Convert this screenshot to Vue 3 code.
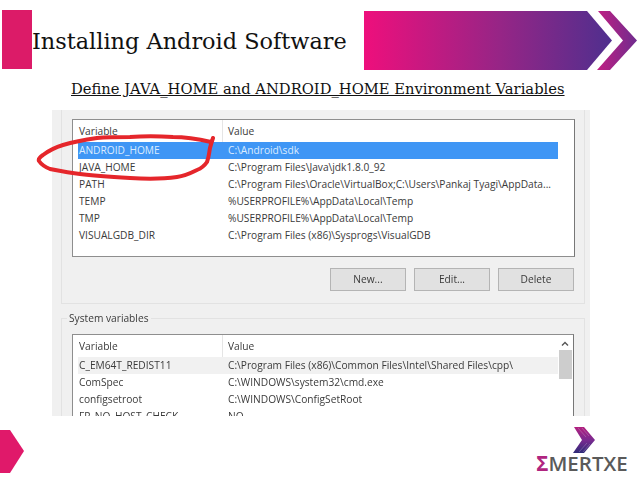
<script setup>
const userRows = [
  { name: 'ANDROID_HOME', value: 'C:\\Android\\sdk', selected: true },
  { name: 'JAVA_HOME', value: 'C:\\Program Files\\Java\\jdk1.8.0_92' },
  { name: 'PATH', value: 'C:\\Program Files\\Oracle\\VirtualBox;C:\\Users\\Pankaj Tyagi\\AppData...' },
  { name: 'TEMP', value: '%USERPROFILE%\\AppData\\Local\\Temp' },
  { name: 'TMP', value: '%USERPROFILE%\\AppData\\Local\\Temp' },
  { name: 'VISUALGDB_DIR', value: 'C:\\Program Files (x86)\\Sysprogs\\VisualGDB' }
]
const systemRows = [
  { name: 'C_EM64T_REDIST11', value: 'C:\\Program Files (x86)\\Common Files\\Intel\\Shared Files\\cpp\\', hover: true },
  { name: 'ComSpec', value: 'C:\\WINDOWS\\system32\\cmd.exe' },
  { name: 'configsetroot', value: 'C:\\WINDOWS\\ConfigSetRoot' },
  { name: 'FP_NO_HOST_CHECK', value: 'NO' }
]
const buttons = ['New...', 'Edit...', 'Delete']
</script>

<template>
  <div class="slide">
    <header class="head">
      <div class="pink-block"></div>
      <h1 class="title">Installing Android Software</h1>
      <svg class="banner" width="274" height="60" viewBox="0 0 274 60">
        <defs>
          <linearGradient id="bannerFill" x1="0" x2="1" y1="0" y2="0">
            <stop offset="0" stop-color="#ee0f7c" />
            <stop offset="0.55" stop-color="#962586" />
            <stop offset="1" stop-color="#4f2f8e" />
          </linearGradient>
          <linearGradient id="chevFill" x1="0" x2="1" y1="0" y2="0">
            <stop offset="0" stop-color="#c01f83" />
            <stop offset="1" stop-color="#6f2c8e" />
          </linearGradient>
        </defs>
        <polygon points="0,0 223,0 248,29.5 223,59 0,59" fill="url(#bannerFill)" />
        <polygon points="234,0 246,0 273,29.5 246,59 233,59 259,29.5" fill="url(#chevFill)" />
      </svg>
    </header>

    <h2 class="subtitle">Define JAVA_HOME and ANDROID_HOME Environment Variables</h2>

    <section class="shot">
      <div class="shot-inner">
        <div class="group user-group">
          <div class="list user-list">
            <div class="list-head">
              <span class="col-a">Variable</span>
              <span class="col-b">Value</span>
            </div>
            <div
              v-for="row in userRows"
              :key="row.name"
              class="row"
              :class="{ selected: row.selected }"
            >
              <span class="col-a">{{ row.name }}</span>
              <span class="col-b">{{ row.value }}</span>
            </div>
          </div>
          <div class="buttons">
            <button v-for="b in buttons" :key="b" class="btn" type="button">{{ b }}</button>
          </div>
        </div>

        <div class="group system-group">
          <span class="legend">System variables</span>
          <div class="list system-list">
            <div class="list-head">
              <span class="col-a">Variable</span>
              <span class="col-b">Value</span>
            </div>
            <div
              v-for="row in systemRows"
              :key="row.name"
              class="row"
              :class="{ hover: row.hover }"
            >
              <span class="col-a">{{ row.name }}</span>
              <span class="col-b">{{ row.value }}</span>
            </div>
            <div class="scrollbar">
              <svg class="scroll-up" width="8" height="6" viewBox="0 0 8 6">
                <path d="M1 4.5 L4 1.5 L7 4.5" fill="none" stroke="#555" stroke-width="1.4" />
              </svg>
              <div class="thumb"></div>
            </div>
          </div>
        </div>
      </div>
      <svg class="scribble" width="190" height="60" viewBox="0 0 190 60">
        <path
          d="M173 16 C160 13 148 11 135 11 C120 10 105 10 92 11 C80 11 70 11 59 12 C45 14 35 16 25 19 C15 22 9 26 5 29 C2 31 0 33 1 35 C3 38 7 41 12 43 C22 45 32 47 42 48 C58 50 75 51 92 52 C108 53 125 53 139 51 C147 50 153 47 159 44 C164 42 167 39 169 36 C171 31 171 27 172 22 C173 18 174 15 175 12"
          fill="none"
          stroke="#e5262b"
          stroke-width="4"
          stroke-linecap="round"
          stroke-linejoin="round"
        />
      </svg>
    </section>

    <footer class="foot">
      <svg class="hex" width="25" height="44" viewBox="0 0 25 44">
        <polygon points="0,0 10,0 24,21 10,43 0,43" fill="#e0196a" />
      </svg>
      <div class="logo">
        <svg class="logo-mark" width="24" height="27" viewBox="0 0 24 27">
          <defs>
            <linearGradient id="markFill" x1="0" x2="0" y1="0" y2="1">
              <stop offset="0" stop-color="#b2207f" />
              <stop offset="0.5" stop-color="#7a2a90" />
              <stop offset="1" stop-color="#2e2a78" />
            </linearGradient>
          </defs>
          <polygon points="1,0 11,0 22,13 11,26 0,26 9,13" fill="url(#markFill)" />
          <path d="M5 1 L13 10 M9 1 L16 9 M6 25 L14 16 M10 25 L17 17" stroke="#d9d0e6" stroke-opacity="0.35" stroke-width="0.8" />
        </svg>
        <div class="logo-text"><span class="sigma">Σ</span>MERTXE</div>
      </div>
    </footer>
  </div>
</template>

<style scoped>
.slide {
  width: 638px;
  height: 479px;
  background: #fff;
  overflow: hidden;
  display: flex;
  flex-direction: column;
}
.head {
  display: flex;
  align-items: flex-start;
  padding: 10px 0 0 2px;
  height: 70px;
  box-sizing: border-box;
}
.pink-block {
  width: 30px;
  height: 59px;
  background: #dc1b68;
  flex: none;
}
.title {
  margin: 15px 0 0;
  font: 400 22.4px/32px "DejaVu Serif", serif;
  color: #111;
  white-space: nowrap;
}
.banner {
  flex: none;
  margin-left: auto;
  margin-top: 1px;
}
.subtitle {
  margin: 9px 0 0 71px;
  font: 400 14.73px/20px "DejaVu Serif", serif;
  color: #111;
  text-decoration: underline;
  white-space: nowrap;
}
.shot {
  position: relative;
  margin: 11px 0 0 52px;
  width: 538px;
  height: 306px;
  flex: none;
}
.shot-inner {
  height: 100%;
  padding-left: 9px;
  padding-right: 5px;
  box-sizing: border-box;
  background: #f0f0f0;
  overflow: hidden;
  font: 400 10.2px/17px "Open Sans", sans-serif;
  color: #3a3a3a;
}
.group {
  border: 1px solid #e2e2e2;
  box-sizing: border-box;
  padding: 0 10px;
  filter: blur(0.4px);
}
.user-group {
  height: 194px;
  border-top: 0;
  padding-top: 9px;
}
.system-group {
  position: relative;
  margin-top: 14px;
  height: 120px;
  padding-top: 15px;
}
.legend {
  position: absolute;
  left: 5px;
  top: -9px;
  padding: 0 2px;
  background: #f0f0f0;
  white-space: nowrap;
}
.list {
  position: relative;
  background: #fff;
  border: 1px solid #8e8e8e;
  border-right-color: #777;
  box-sizing: border-box;
  padding: 0 5px;
}
.user-list {
  height: 138px;
  width: 503px;
}
.system-list {
  width: 502px;
  height: 110px;
}
.list-head {
  display: flex;
  height: 22px;
  align-items: center;
  position: relative;
}
.list-head::after {
  content: "";
  position: absolute;
  left: 144px;
  top: 0;
  bottom: 0;
  width: 1px;
  background: #e5e5e5;
}
.row {
  display: flex;
  height: 17px;
  align-items: center;
  white-space: nowrap;
  width: 480px;
}
.col-a {
  width: 150px;
  padding-left: 1px;
  box-sizing: border-box;
  flex: none;
}
.col-b {
  flex: none;
}
.selected {
  background: #3f96f5;
  color: #dcecff;
}
.hover {
  background: #f1f1f1;
}
.buttons {
  display: flex;
  justify-content: flex-end;
  gap: 8px;
  margin-top: 11px;
  width: 502px;
}
.btn {
  width: 76px;
  height: 23px;
  padding: 0;
  background: #e1e1e1;
  border: 1px solid #b4b4b4;
  font: inherit;
  color: #3a3a3a;
}
.scrollbar {
  position: absolute;
  right: 1px;
  top: 0;
  bottom: 0;
  width: 14px;
  background: #fff;
  display: flex;
  flex-direction: column;
  align-items: center;
  padding-top: 6px;
  box-sizing: border-box;
}
.scroll-up {
  flex: none;
}
.thumb {
  width: 13px;
  height: 29px;
  margin-top: 3px;
  background: #cdcdcd;
  flex: none;
}
.scribble {
  position: absolute;
  left: -14px;
  top: 16px;
  overflow: visible;
}
.foot {
  display: flex;
  justify-content: space-between;
  align-items: flex-start;
  flex: 1;
}
.hex {
  flex: none;
  margin-top: 14px;
}
.logo {
  display: flex;
  flex-direction: column;
  align-items: center;
  margin-top: 11px;
  margin-right: 9px;
  width: 94px;
}
.logo-mark {
  margin-left: 6px;
  flex: none;
}
.logo-text {
  font: 600 20.5px/18px "Open Sans", sans-serif;
  color: #5a5a5a;
  white-space: nowrap;
}
.sigma {
  color: #b0257f;
  font-weight: 700;
}
</style>
